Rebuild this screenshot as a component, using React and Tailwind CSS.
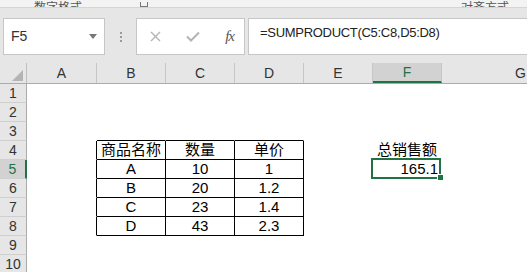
import React from 'react';

const FONT = { fontFamily: "'Liberation Sans', 'Noto Sans CJK SC', sans-serif" };

const COLS = [
  { id: 'A', w: 'w-[70px]' },
  { id: 'B', w: 'w-[69px]' },
  { id: 'C', w: 'w-[69px]' },
  { id: 'D', w: 'w-[69px]' },
  { id: 'E', w: 'w-[69px]' },
  { id: 'F', w: 'w-[69px]' },
  { id: 'G', w: 'w-[158px]' },
];

const ROWS = [1, 2, 3, 4, 5, 6, 7, 8, 9, 10];

const CELLS = {
  B4: '商品名称', C4: '数量', D4: '单价',
  B5: 'A', C5: '10', D5: '1',
  B6: 'B', C6: '20', D6: '1.2',
  B7: 'C', C7: '23', D7: '1.4',
  B8: 'D', C8: '43', D8: '2.3',
  F4: '总销售额', F5: '165.1',
};

function inTable(col, row) {
  return ['B', 'C', 'D'].includes(col) && row >= 4 && row <= 8;
}

function cellBorder(col, row) {
  const right = inTable(col, row) || (col === 'A' && row >= 4 && row <= 8);
  const bottom = inTable(col, row) || (['B', 'C', 'D'].includes(col) && row === 3);
  return `${right ? 'border-r-black' : 'border-r-transparent'} ${bottom ? 'border-b-black' : 'border-b-transparent'}`;
}

function Cell({ col, row }) {
  const key = col.id + row;
  const text = CELLS[key];
  const selected = key === 'F5';
  return (
    <div
      className={`relative ${col.w} shrink-0 h-full border-r border-b ${cellBorder(col.id, row)} flex items-center text-[15px] leading-[18px] text-black ${
        selected ? 'justify-end pr-[3px]' : 'justify-center'
      }`}
    >
      {text && <span className="whitespace-nowrap">{text}</span>}
      {selected && (
        <>
          <div className="absolute -left-[2px] -top-[2px] w-[70px] h-[21px] border-2 border-[#217346]" />
          <div className="absolute -right-[3px] -bottom-[3px] w-[5px] h-[5px] bg-[#217346] border border-white box-content" />
        </>
      )}
    </div>
  );
}

export default function App() {
  return (
    <div className="w-[527px] h-[272px] overflow-hidden bg-white" style={FONT}>
      {/* ribbon remnant, only its lower edge is in view */}
      <div className="h-[8px] bg-[#f3f3f3] border-b border-[#d5d5d5] overflow-hidden relative text-[12px] text-[#555]">
        <div className="flex items-end h-[7px]">
          <span className="ml-[34px] leading-[12px] -mb-[7px]">数字格式</span>
          <span className="ml-[58px] w-[8px] h-[5px] border border-[#777] border-t-0" />
          <span className="ml-auto mr-[18px] leading-[12px] -mb-[7px]">对齐方式</span>
        </div>
      </div>

      {/* formula bar */}
      <div className="h-[55px] bg-[#e6e6e6] flex items-start pt-[10px]">
        <div className="ml-[3px] w-[102px] h-[37px] bg-white border border-[#c6c6c6] flex items-center pl-[7px] pr-[7px] text-[14px] text-[#333]">
          <span>F5</span>
          <svg className="ml-auto" width="8" height="5" viewBox="0 0 8 5">
            <path d="M0 0 H8 L4 5 Z" fill="#777" />
          </svg>
        </div>
        <div className="w-[31px] h-[37px] flex flex-col items-center justify-center gap-[2px]">
          <span className="w-[2px] h-[2px] bg-[#9a9a9a]" />
          <span className="w-[2px] h-[2px] bg-[#9a9a9a]" />
          <span className="w-[2px] h-[2px] bg-[#9a9a9a]" />
        </div>
        <div className="w-[109px] h-[37px] bg-white border border-[#c6c6c6] flex items-center justify-between pl-[13px] pr-[10px]">
          <svg width="11" height="11" viewBox="0 0 11 11">
            <path d="M1 1 L10 10 M10 1 L1 10" stroke="#b4b4b4" strokeWidth="1.4" fill="none" />
          </svg>
          <svg width="14" height="11" viewBox="0 0 14 11">
            <path d="M1 5.5 L5 9.5 L13 1.5" stroke="#b4b4b4" strokeWidth="2" fill="none" />
          </svg>
          <span className="italic text-[15px] text-[#555] tracking-[-1px]" style={{ fontFamily: "'Liberation Serif', serif" }}>
            fx
          </span>
        </div>
        <div className="ml-[3px] flex-1 h-[37px] bg-white border border-r-0 border-[#c6c6c6] pl-[11px] pt-[5px] text-[13px] tracking-[-0.3px] text-[#222] leading-[18px]">
          =SUMPRODUCT(C5:C8,D5:D8)
        </div>
      </div>

      {/* column headers */}
      <div className="h-[21px] bg-[#e6e6e6] border-b border-[#ababab] flex">
        <div className="w-[27px] shrink-0 h-full border-r border-[#c0c0c0] flex items-end justify-end pr-[3px] pb-[2px]">
          <svg width="11" height="11" viewBox="0 0 11 11">
            <path d="M11 0 V11 H0 Z" fill="#b4b4b4" />
          </svg>
        </div>
        {COLS.map(col => (
          <div
            key={col.id}
            className={`${col.w} shrink-0 h-full border-r border-[#c6c6c6] flex items-center justify-center text-[14px] ${
              col.id === 'F' ? 'bg-[#d2d2d2] text-[#217346] border-b-2 border-b-[#217346]' : 'text-[#333]'
            }`}
          >
            {col.id}
          </div>
        ))}
      </div>

      {/* rows */}
      {ROWS.map(row => (
        <div key={row} className="h-[19px] flex">
          <div
            className={`w-[27px] shrink-0 h-full border-b border-b-[#cfcfcf] flex items-center justify-center text-[14px] ${
              row === 5
                ? 'bg-[#d2d2d2] text-[#217346] border-r-2 border-r-[#217346]'
                : 'bg-[#e6e6e6] text-[#333] border-r border-r-[#ababab]'
            }`}
          >
            {row}
          </div>
          {COLS.map(col => (
            <Cell key={col.id} col={col} row={row} />
          ))}
        </div>
      ))}
    </div>
  );
}
